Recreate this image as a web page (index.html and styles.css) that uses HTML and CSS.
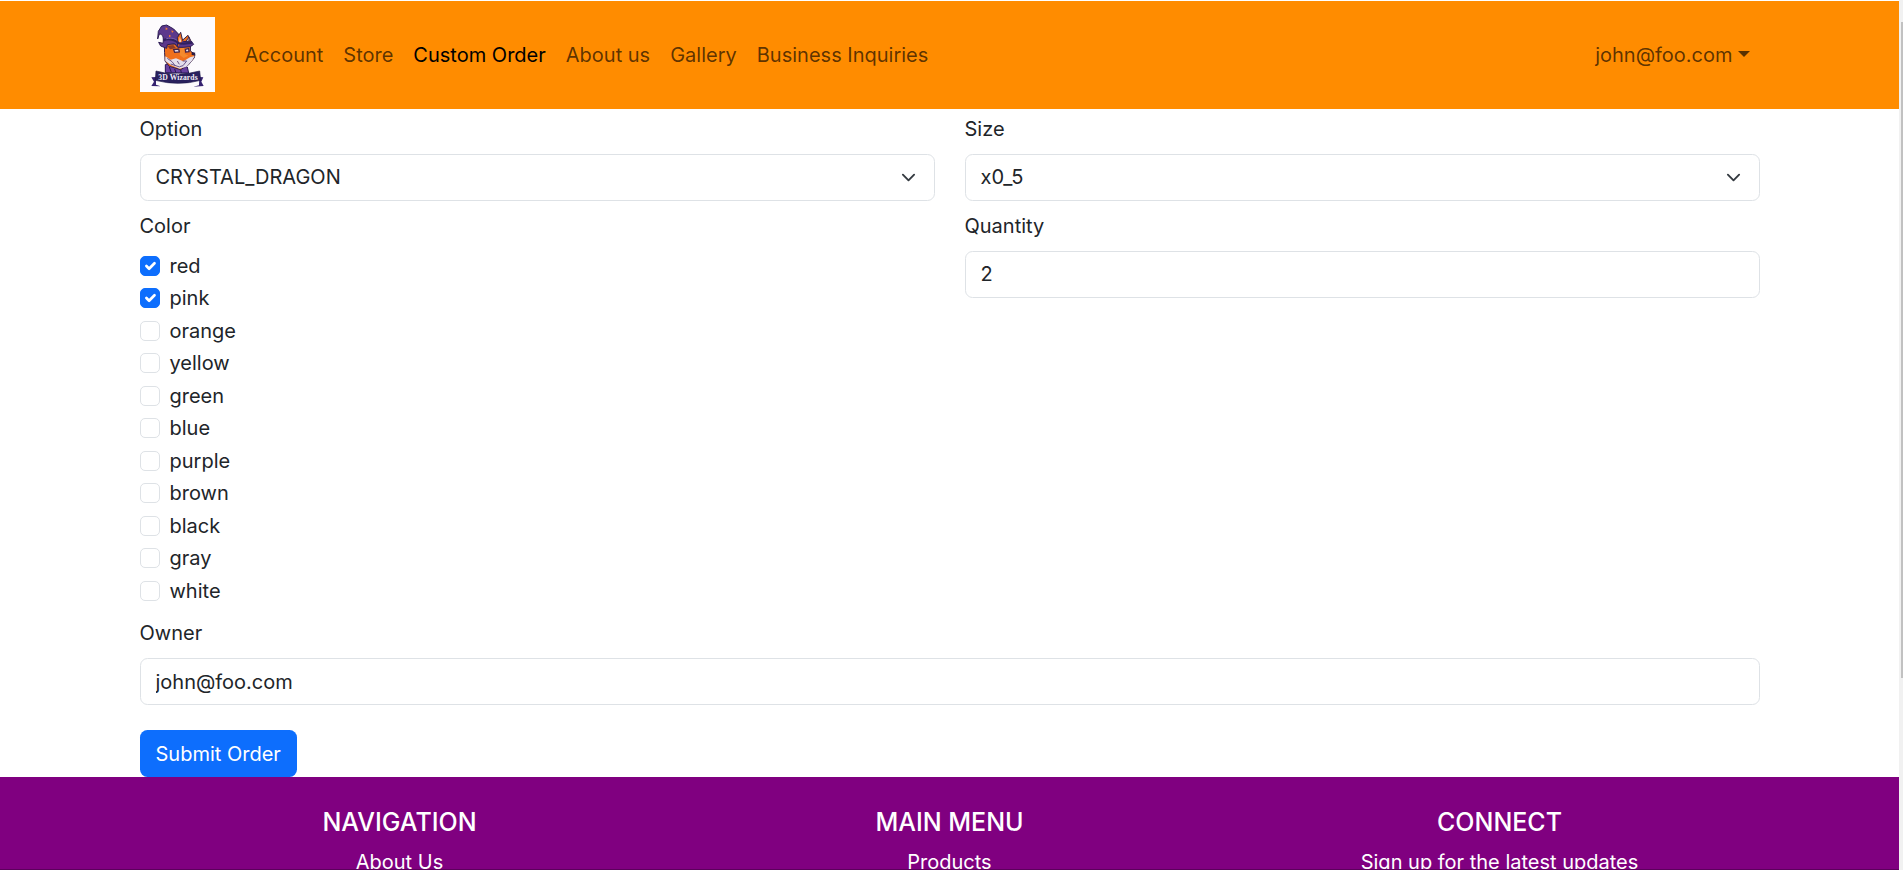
FILE: index.html
```html
<!DOCTYPE html>
<html lang="en">
<head>
<meta charset="utf-8">
<title>3D Wizards - Custom Order</title>
<link rel="stylesheet" href="styles.css">
</head>
<body>
<div class="window">
<div class="page">
  <header class="navbar">
    <div class="container navbar-inner">
      <a class="brand" href="#">
        <svg class="logo" viewBox="0 0 225 225" role="img" aria-label="3D Wizards">
          <rect width="225" height="225" fill="#fdfbfd"/>
          <!-- robe -->
          <path d="M76 143 L98 136 L142 150 L146 168 L76 167Z" fill="#6940a0" stroke="#251653" stroke-width="3"/>
          <path d="M88 150 L94 166 M104 156 L108 168 M122 158 L124 168" fill="none" stroke="#251653" stroke-width="3"/>
          <!-- ears and face -->
          <path d="M76 77 C70 96 76 118 75 132 L88 148 L122 158 L146 143 L163 122 L165 112 L151 102 L152 70 L144 55 L127 70 L116 83Z" fill="#f0701c" stroke="#30204e" stroke-width="3"/>
          <path d="M82 86 L100 84 L108 94 L90 97Z" fill="#8a3c2c"/>
          <path d="M138 73 L147 60 L147 82 L140 90Z" fill="#e9e3ed" stroke="#4b294c" stroke-width="3"/>
          <path d="M76 118 L92 128 L108 124 L130 133 L150 121 L164 117 L156 131 L139 149 L119 155 L94 145 L76 132Z" fill="#e4dfec"/>
          <path d="M82 124 L96 134 L106 147 M128 132 L140 132 L129 146 L119 149 M92 141 L119 150 M112 132 L118 142" fill="none" stroke="#6b5688" stroke-width="3"/>
          <path d="M101 98 L116 96 L118 105 L104 106Z M136 97 L146 95 L147 104 L137 105Z" fill="#e6dfec" stroke="#44264b" stroke-width="4"/>
          <path d="M121 94 L132 92 L134 110 L145 116 L131 123 L119 114Z" fill="#f58a2d"/>
          <path d="M155 105 L166 107 L164 115 L155 114Z" fill="#2b1c43"/>
          <!-- hat -->
          <path d="M69 79 C72 61 68 51 58 51 L53 66 L55 43 L65 27 L80 24 L101 36 L119 55 L130 74 L153 72 L161 82 L151 89 L129 91 L113 91 L104 80 L82 83 L80 94 L62 87 L56 76Z" fill="#5c388c" stroke="#2d1c55" stroke-width="3"/>
          <path d="M113 90 L112 62 L122 46 L128 71" fill="#f0701c" stroke="#30204e" stroke-width="3"/>
          <path d="M118 78 L119 60 L123 73Z" fill="#efe8f0"/>
          <path d="M70 70 C87 62 107 69 117 79 L132 80 L157 77" fill="none" stroke="#302060" stroke-width="7"/>
          <path d="M79 65 C97 61 106 66 112 71" fill="none" stroke="#8060b0" stroke-width="3"/>
          <path d="M77 31l7 5-7 3z M94 40l7 3-5 5z M87 53l7 4-7 4z" fill="#f57d32"/>
          <!-- ribbon -->
          <path d="M34 181 L48 180 L48 203 L62 208 L34 207 L42 194Z M190 181 L178 180 L177 205 L160 209 L191 207 L184 194Z" fill="#352170"/>
          <path d="M48 162 Q111 181 179 162 L182 190 Q115 208 46 190Z" fill="#29205e" stroke="#1e184c" stroke-width="2"/>
          <text class="logo-text" x="114" y="188" text-anchor="middle" textLength="118">3D Wizards</text>
        </svg>
      </a>
      <nav class="nav">
        <a class="nav-link" href="#">Account</a>
        <a class="nav-link" href="#">Store</a>
        <a class="nav-link active" href="#">Custom Order</a>
        <a class="nav-link" href="#">About us</a>
        <a class="nav-link" href="#">Gallery</a>
        <a class="nav-link" href="#">Business Inquiries</a>
      </nav>
      <a class="nav-link user-menu" href="#">john@foo.com</a>
    </div>
  </header>

  <main class="container">
    <form class="order-form">
      <div class="field">
        <label class="form-label" for="option">Option</label>
        <div class="select-wrap">
          <select class="form-control" id="option"><option>CRYSTAL_DRAGON</option></select>
          <svg class="chevron" viewBox="0 0 16 16"><path d="m2 5 6 6 6-6"/></svg>
        </div>
      </div>
      <div class="field">
        <label class="form-label" for="size">Size</label>
        <div class="select-wrap">
          <select class="form-control" id="size"><option>x0_5</option></select>
          <svg class="chevron" viewBox="0 0 16 16"><path d="m2 5 6 6 6-6"/></svg>
        </div>
      </div>
      <div class="field">
        <div class="form-label color-label">Color</div>
        <div class="checks">
          <label class="check"><span class="box checked"><svg viewBox="0 0 20 20"><path d="m6 10 3 3 6-6"/></svg></span>red</label>
          <label class="check"><span class="box checked"><svg viewBox="0 0 20 20"><path d="m6 10 3 3 6-6"/></svg></span>pink</label>
          <label class="check"><span class="box"></span>orange</label>
          <label class="check"><span class="box"></span>yellow</label>
          <label class="check"><span class="box"></span>green</label>
          <label class="check"><span class="box"></span>blue</label>
          <label class="check"><span class="box"></span>purple</label>
          <label class="check"><span class="box"></span>brown</label>
          <label class="check"><span class="box"></span>black</label>
          <label class="check"><span class="box"></span>gray</label>
          <label class="check"><span class="box"></span>white</label>
        </div>
      </div>
      <div class="field">
        <label class="form-label" for="quantity">Quantity</label>
        <input class="form-control" id="quantity" type="text" value="2">
      </div>
      <div class="field wide">
        <label class="form-label" for="owner">Owner</label>
        <input class="form-control owner" id="owner" type="text" value="john@foo.com">
      </div>
      <button class="submit" type="button">Submit Order</button>
    </form>
  </main>

  <footer class="footer">
    <div class="container footer-cols">
      <section><h5>NAVIGATION</h5><p>About Us</p></section>
      <section><h5>MAIN MENU</h5><p>Products</p></section>
      <section><h5>CONNECT</h5><p>Sign up for the latest updates</p></section>
    </div>
  </footer>
</div>
<div class="scrollbar"><div class="thumb"></div></div>
</div>
</body>
</html>
```

FILE: styles.css
```css
* { box-sizing: border-box; }

body {
  margin: 0;
  overflow: hidden;
  background: #fff;
  color: #212529;
  font: 400 20px/30px Inter, "Liberation Sans", sans-serif;
}

.window {
  display: flex;
  height: 870px;
  overflow: hidden;
}

.page {
  flex: 1;
  padding-top: 1px;
  display: flex;
  flex-direction: column;
}

.container {
  width: 1650px;
  margin: 0 auto;
  padding: 0 15px;
}

.navbar {
  height: 108px;
  flex: none;
  display: flex;
  background: #ff8c00;
}

.navbar-inner {
  display: flex;
  align-items: center;
}

.brand {
  display: block;
  height: 75px;
  margin: 0 20px 1px 0;
}

.logo {
  display: block;
  width: 75px;
  height: 75px;
}

.logo-text {
  font: 700 23px "Liberation Serif", serif;
  fill: #f1edf6;
}

.nav { display: flex; }

.nav-link {
  padding: 10px;
  color: rgba(0, 0, 0, 0.65);
  text-decoration: none;
}

.nav-link.active { color: #000; }

.user-menu { margin-left: auto; }

.user-menu::after {
  content: "";
  display: inline-block;
  margin-left: 5px;
  vertical-align: 5px;
  border-top: 6px solid;
  border-right: 6px solid transparent;
  border-left: 6px solid transparent;
}

.order-form {
  display: grid;
  grid-template-columns: 1fr 1fr;
  column-gap: 30px;
  row-gap: 10px;
  padding-top: 5px;
}

.wide { grid-column: 1 / -1; }

.form-label {
  display: block;
  margin-bottom: 10px;
}

.color-label { margin-bottom: 9.75px; }

.form-control {
  display: block;
  width: 100%;
  height: 47px;
  padding: 7px 15px 8px;
  appearance: none;
  border: 1px solid #dee2e6;
  border-radius: 7.5px;
  background: #fff;
  color: #212529;
  font: inherit;
}

.owner { padding: 8px 15px 7px; }

.select-wrap { position: relative; }

.chevron {
  position: absolute;
  top: 16px;
  right: 18.5px;
  width: 15px;
  height: 15px;
}

.chevron path {
  fill: none;
  stroke: #343a40;
  stroke-width: 2;
  stroke-linecap: round;
  stroke-linejoin: round;
}

.checks {
  display: flex;
  flex-direction: column;
  gap: 2.5px;
  padding-bottom: 2.25px;
}

.check {
  display: flex;
  align-items: center;
  gap: 10px;
  height: 30px;
}

.box {
  width: 20px;
  height: 20px;
  border: 1px solid #dee2e6;
  border-radius: 5px;
  background: #fff;
}

.box.checked {
  border-color: #0d6efd;
  background: #0d6efd;
}

.box svg {
  display: block;
  width: 18px;
  height: 18px;
}

.box path {
  fill: none;
  stroke: #fff;
  stroke-width: 3;
  stroke-linecap: round;
  stroke-linejoin: round;
}

.submit {
  justify-self: start;
  height: 47px;
  margin-top: 15px;
  padding: 0 16px;
  border: 0;
  border-radius: 7.5px;
  background: #0d6efd;
  color: #fff;
  font: inherit;
}

.footer {
  flex: 1;
  min-height: 0;
  padding-top: 30px;
  overflow: hidden;
  border-bottom: 1px solid #5c005c;
  background: purple;
  color: #fff;
  text-align: center;
}

.footer-cols {
  display: grid;
  grid-template-columns: repeat(3, 1fr);
  padding: 0;
}

.footer h5 {
  margin: 0 0 10px;
  font-size: 25px;
  font-weight: 500;
  line-height: 30px;
}

.footer p { margin: 0; }

.scrollbar {
  width: 4px;
  height: 870px;
  padding: 22px 0 0 2px;
  background: #f1f1f1;
}

.thumb {
  height: 656px;
  background: #c1c1c1;
}
```
